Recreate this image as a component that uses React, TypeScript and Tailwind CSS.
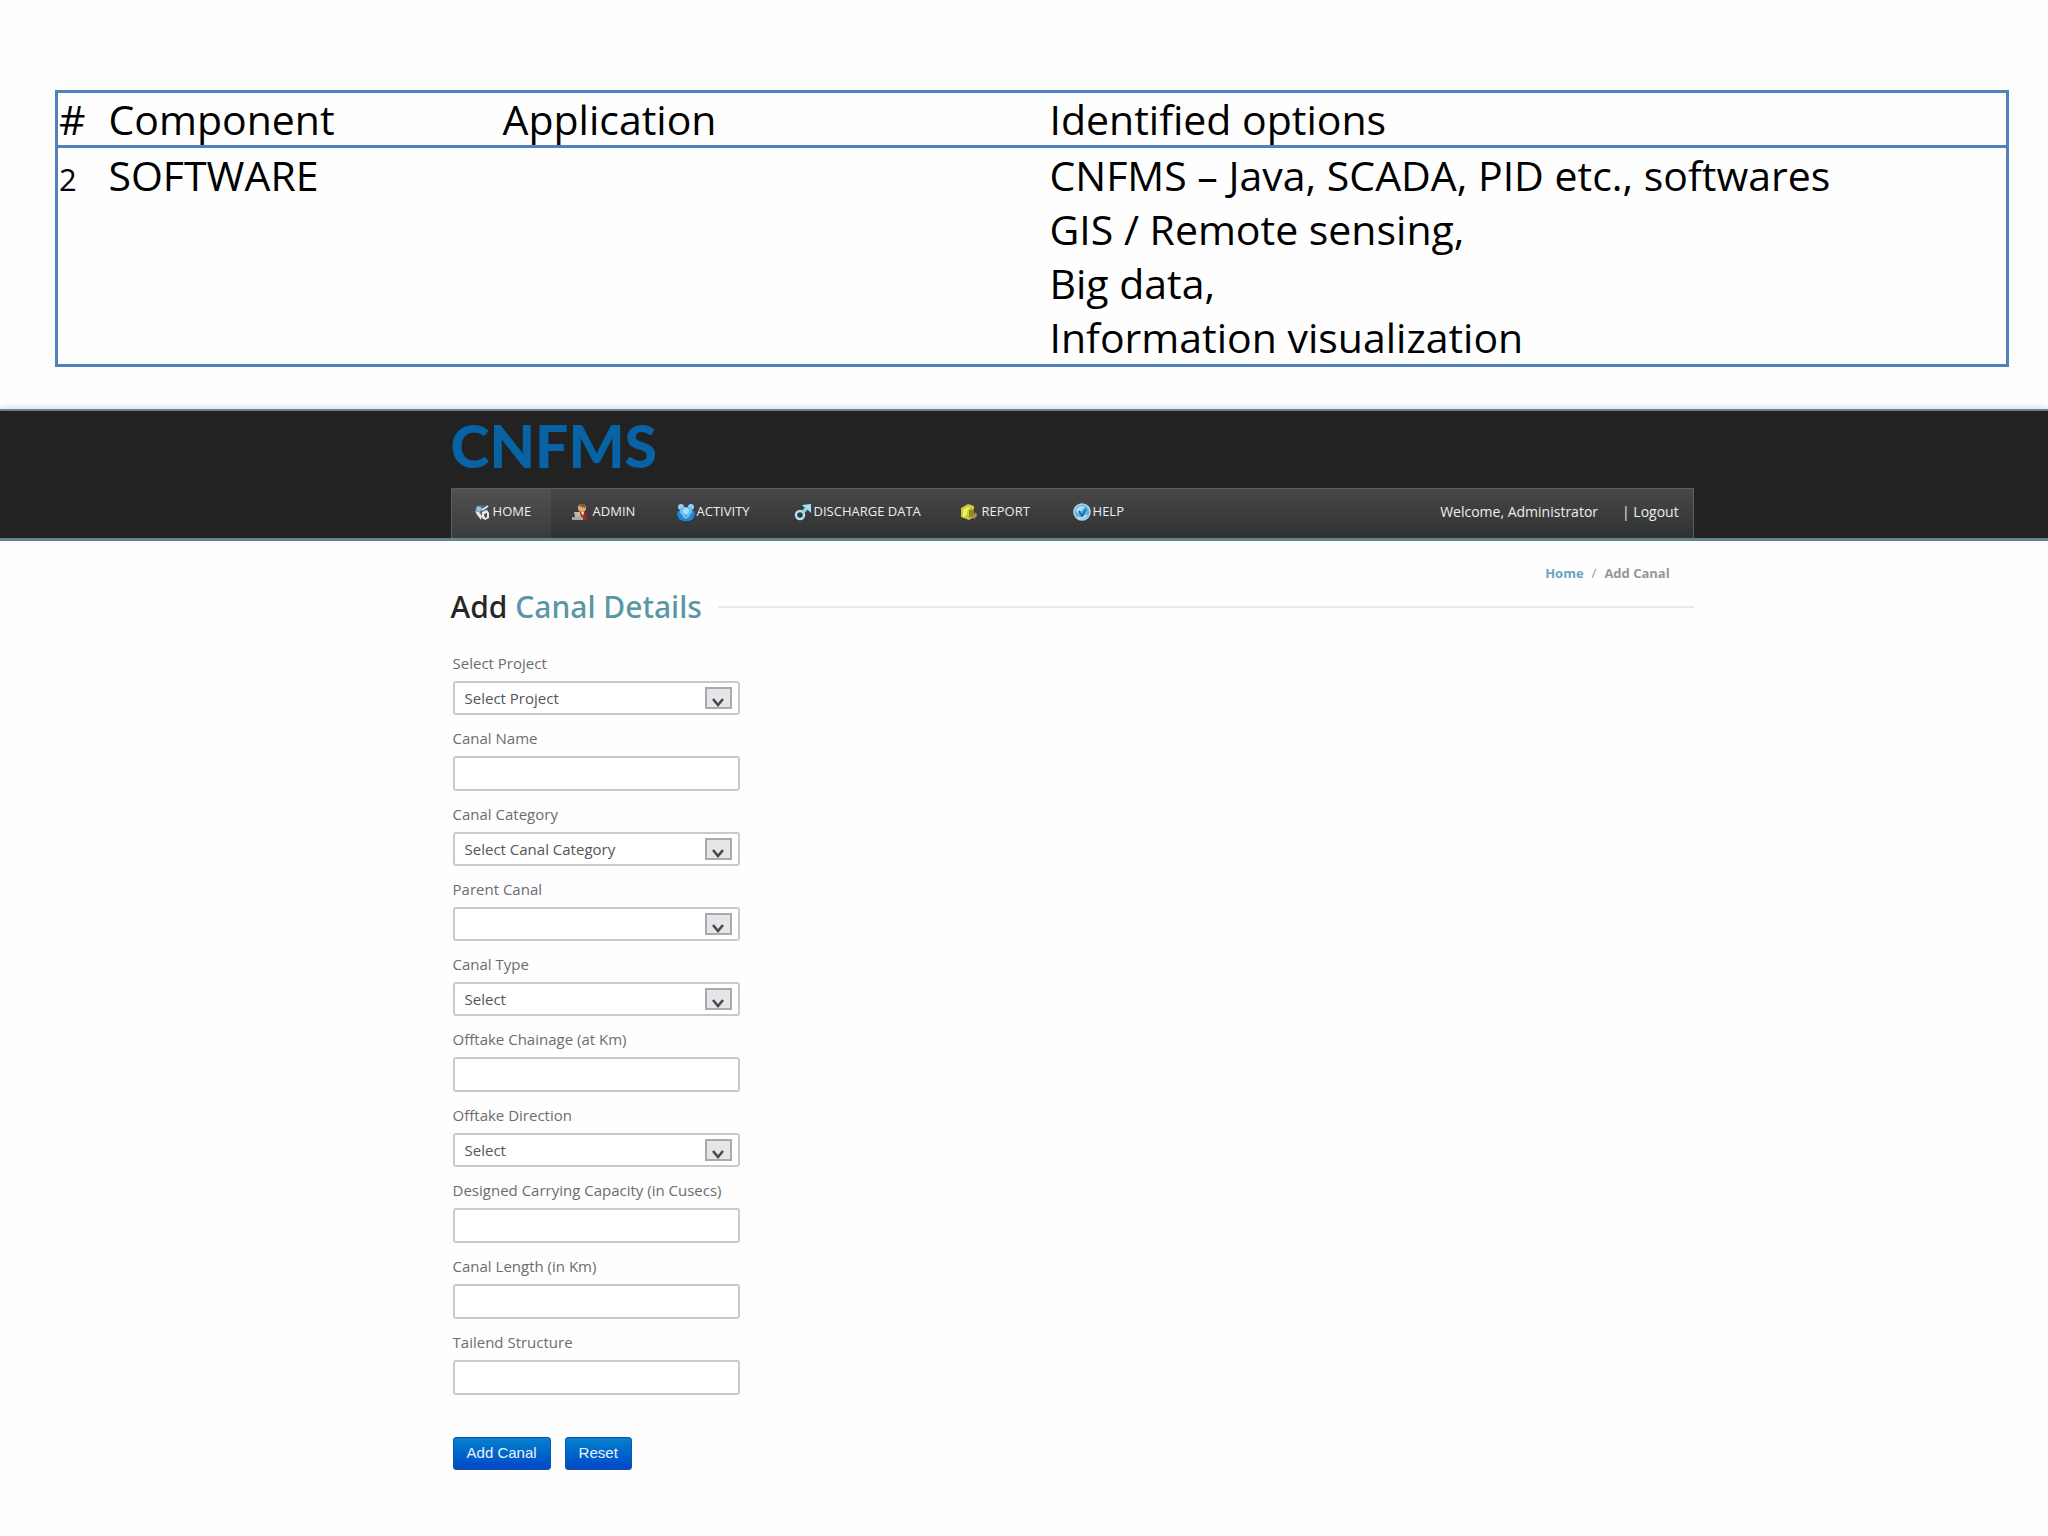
import type { ReactNode } from "react";

interface NavItem {
  label: string;
  icon: ReactNode;
  className: string;
}

interface Field {
  id: string;
  label: string;
  type: "select" | "text";
  value?: string;
}

const HomeIcon = () => (
  <svg viewBox="0 0 18 18" className="h-[18px] w-[18px] shrink-0">
    <circle cx="8" cy="8" r="6" fill="#4f6a7a" />
    <path d="M4 3l4 1 1 3-3 2-3-2z" fill="#9cc2d8" />
    <path d="M2 8l3 5 3 4 1-4-3-4z" fill="#dfe8ed" />
    <path d="M9 7l6-4" stroke="#e4e4e4" strokeWidth="1.8" />
    <path d="M9 9l5-2 2 3v5l-4 2-3-2z" fill="#e9e9e9" />
    <path d="M11 11l3-1v4l-2 1z" fill="#4a4a4a" />
  </svg>
);

const AdminIcon = () => (
  <svg viewBox="0 0 18 18" className="h-[18px] w-[18px] shrink-0">
    <path d="M9 8l6 1 2 8H8z" fill="#8f2f1e" />
    <circle cx="11" cy="5" r="4" fill="#e0ab72" />
    <path d="M8 3c1-3 6-3 7 0l-1 2z" fill="#8a5a34" />
    <path d="M10 9l2 4 1-4z" fill="#f4e9df" />
    <path d="M3 9h6l1 5H4z" fill="#c9b79c" />
    <path d="M1 14h11v3H1z" fill="#a8a8a8" />
  </svg>
);

const ActivityIcon = () => (
  <svg viewBox="0 0 18 18" className="h-[18px] w-[18px] shrink-0">
    <path d="M0 11c0-3 3-4 4-4h10c2 0 4 1 4 4l-2 5-4 2H6l-4-2z" fill="#2386d8" />
    <circle cx="4" cy="4" r="3" fill="#8cd3fa" />
    <circle cx="14" cy="4" r="3" fill="#8cd3fa" />
    <path d="M3 5l4-1h4l4 1v5l-3 3H6l-3-3z" fill="#6cbcf2" />
    <circle cx="9" cy="8" r="3" fill="#a6defc" />
    <path d="M6 13l3 2 3-2" fill="none" stroke="#8cd3fa" strokeWidth="1.4" />
  </svg>
);

const DischargeIcon = () => (
  <svg viewBox="0 0 18 18" className="h-[18px] w-[18px] shrink-0">
    <circle cx="6" cy="12" r="4" fill="#2b3c42" stroke="#b4e4ee" strokeWidth="2.4" />
    <path d="M9 9l5-5" stroke="#8ad4e6" strokeWidth="3.4" />
    <path d="M8 2l9-1v9l-3-3-4-3z" fill="#a4e2f0" />
  </svg>
);

const ReportIcon = () => (
  <svg viewBox="0 0 18 18" className="h-[18px] w-[18px] shrink-0">
    <path d="M1 5l7-4 6 2v11l-5 3-8-3z" fill="#c9cc35" />
    <path d="M3 8c1-3 4-4 7-4l-2 3-2 6-3 1z" fill="#f0ee72" />
    <path d="M9 7l5-1v7l-5 2z" fill="#8e8a1c" />
    <path d="M12 14l4-5 1 4-3 3z" fill="#b58a5a" />
  </svg>
);

const HelpIcon = () => (
  <svg viewBox="0 0 18 18" className="h-[18px] w-[18px] shrink-0">
    <circle cx="9" cy="9" r="8" fill="#5fb2e2" stroke="#b9d3e2" strokeWidth="1.6" />
    <path d="M3 7c2-4 6-5 9-3L8 8l-4 2z" fill="#a9dbf4" />
    <path d="M6 8l3 5 4-7" fill="none" stroke="#1c6fae" strokeWidth="1.8" />
    <path d="M5 14c3 2 6 1 9-2" fill="none" stroke="#d9f1fb" strokeWidth="1.2" />
  </svg>
);

const navItems: NavItem[] = [
  { label: "HOME", icon: <HomeIcon />, className: "w-[99px] gap-[2px] pl-[21px] bg-white/5" },
  { label: "ADMIN", icon: <AdminIcon />, className: "w-[105px] gap-1 pl-[20px]" },
  { label: "ACTIVITY", icon: <ActivityIcon />, className: "w-[117px] gap-[2px] pl-[21px]" },
  { label: "DISCHARGE DATA", icon: <DischargeIcon />, className: "w-[167px] gap-[2px] pl-[21px]" },
  { label: "REPORT", icon: <ReportIcon />, className: "w-[112px] gap-1 pl-[20px]" },
  { label: "HELP", icon: <HelpIcon />, className: "w-[90px] gap-[2px] pl-[21px]" },
];

const fields: Field[] = [
  { id: "project", label: "Select Project", type: "select", value: "Select Project" },
  { id: "name", label: "Canal Name", type: "text" },
  { id: "category", label: "Canal Category", type: "select", value: "Select Canal Category" },
  { id: "parent", label: "Parent Canal", type: "select", value: "" },
  { id: "type", label: "Canal Type", type: "select", value: "Select" },
  { id: "chainage", label: "Offtake Chainage (at Km)", type: "text" },
  { id: "direction", label: "Offtake Direction", type: "select", value: "Select" },
  { id: "capacity", label: "Designed Carrying Capacity (in Cusecs)", type: "text" },
  { id: "length", label: "Canal Length (in Km)", type: "text" },
  { id: "tailend", label: "Tailend Structure", type: "text" },
];

const OptionsTable = () => (
  <div className="pt-[90px] pr-[39px] pb-[42px] pl-[55px]">
    <table className="w-full table-fixed border-collapse border-[3px] border-[#4f81bd] text-left text-[41px] leading-[54px] text-black">
      <colgroup>
        <col className="w-[51px]" />
        <col className="w-[394px]" />
        <col className="w-[547px]" />
        <col />
      </colgroup>
      <thead>
        <tr className="border-b-[3px] border-[#4f81bd] leading-[52px]">
          <th className="pl-px font-normal">#</th>
          <th className="pl-px font-normal">Component</th>
          <th className="pl-px font-normal">Application</th>
          <th className="pl-px font-normal">Identified options</th>
        </tr>
      </thead>
      <tbody>
        <tr className="align-top">
          <td className="pl-px">
            <span className="text-[31px]">2</span>
          </td>
          <td className="pl-px">SOFTWARE</td>
          <td></td>
          <td className="pl-px">
            <p>CNFMS – Java, SCADA, PID etc., softwares</p>
            <p>GIS / Remote sensing,</p>
            <p>Big data,</p>
            <p>Information visualization</p>
          </td>
        </tr>
      </tbody>
    </table>
  </div>
);

const Header = () => (
  <header className="border-t-2 border-b-[3px] border-t-[#6f8088] border-b-[#63858a] bg-[#222223] pr-[17.3%] pl-[22%] shadow-[0_-3px_4px_#dbeaf3]">
    <div className="flex h-[77px] items-center pb-2 font-['Lato'] text-[59px] leading-[60px] font-black text-[#0863a5]">
      CNFMS
    </div>
    <nav className="flex h-[50px] items-stretch justify-between border border-b-0 border-[#5c5c5c] bg-linear-to-b from-[#484848] to-[#303132] text-[13px] text-[#eeeeee]">
      <div className="flex">
        {navItems.map((item) => (
          <a
            key={item.label}
            href="#"
            className={`flex items-center pb-1 whitespace-nowrap ${item.className}`}
          >
            {item.icon}
            {item.label}
          </a>
        ))}
      </div>
      <div className="flex items-center gap-6 pr-[14px] pb-1 text-[14px] whitespace-nowrap">
        <span>Welcome, Administrator</span>
        <span>
          | <a href="#">Logout</a>
        </span>
      </div>
    </nav>
  </header>
);

const FormField = ({ field }: { field: Field }) => (
  <div>
    <label htmlFor={field.id} className="mb-2 block text-[15px] leading-[20px] text-[#6e6b70]">
      {field.label}
    </label>
    {field.type === "select" ? (
      <div className="relative">
        <select
          id={field.id}
          defaultValue={field.value}
          className="block h-[34px] w-full appearance-none rounded-[3px] border-2 border-[#cbc9cd] bg-white pr-10 pl-[10px] text-[15px] text-[#57545a]"
        >
          <option value={field.value}>{field.value}</option>
        </select>
        <span className="pointer-events-none absolute top-[6px] right-2 flex h-[22px] w-[27px] items-end justify-center border-2 border-[#aaa9ad] bg-[#e6e5e8]">
          <svg viewBox="0 0 12 9" className="h-[9px] w-3">
            <path d="M1 1l5 6 5-6" fill="none" stroke="#4a484c" strokeWidth="2.6" />
          </svg>
        </span>
      </div>
    ) : (
      <input
        id={field.id}
        type="text"
        className="block h-[35px] w-full rounded-[3px] border-2 border-[#cbc9cd] bg-white px-[10px] text-[15px]"
      />
    )}
  </div>
);

const buttonClass =
  "h-[33px] rounded-[3px] border border-[#0b55a8] bg-linear-to-b from-[#0a80cc] to-[#0646c8] px-[13px] font-['Liberation_Sans'] text-[15px] text-[#e8f2fc]";

const App = () => {
  return (
    <div className="min-h-screen bg-[#fefefe] font-['Open_Sans','Noto_Sans',sans-serif]">
      <OptionsTable />
      <Header />
      <main className="pr-[17.3%] pb-10 pl-[22%]">
        <div className="flex justify-end gap-2 pt-[22px] pr-6 text-[13px] leading-[20px] font-bold text-[#97959b]">
          <a href="#" className="text-[#6ba3bd]">
            Home
          </a>
          <span className="font-normal">/</span>
          <span>Add Canal</span>
        </div>
        <div className="flex items-center gap-4">
          <h1 className="font-['Noto_Sans'] text-[30px] leading-[48px] font-medium whitespace-nowrap text-[#262626]">
            Add <span className="text-[#5a97a6]">Canal Details</span>
          </h1>
          <div className="h-[2px] grow bg-[#e9e8ea]"></div>
        </div>
        <form className="pt-[22px]" onSubmit={(e) => e.preventDefault()}>
          <div className="ml-[2px] flex w-[287px] flex-col gap-[13px]">
            {fields.map((field) => (
              <FormField key={field.id} field={field} />
            ))}
          </div>
          <div className="mt-[42px] ml-[2px] flex gap-[14px]">
            <button type="submit" className={buttonClass}>
              Add Canal
            </button>
            <button type="reset" className={buttonClass}>
              Reset
            </button>
          </div>
        </form>
      </main>
    </div>
  );
};

export default App;
